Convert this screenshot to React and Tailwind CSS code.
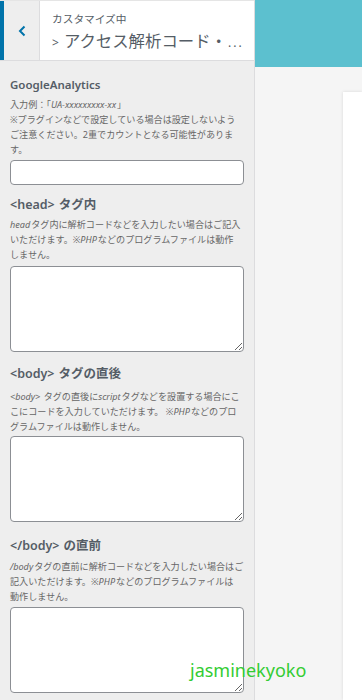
import React from 'react';

const sans = { fontFamily: "'Noto Sans', 'Noto Sans CJK JP', sans-serif" };

// 説明文
const Desc = ({ children, className = '' }) => (
  <p className={`text-[9.1px] leading-[15px] text-[#666] whitespace-nowrap ${className}`}>{children}</p>
);

const Heading = ({ children, className = '' }) => (
  <h3 className={`text-[12.5px] leading-[18px] font-bold text-[#555d66] ${className}`}>{children}</h3>
);

const Tag = ({ children }) => <span className="font-semibold mr-[4px]">{children}</span>;

const I = ({ children }) => <i className="mr-[1px]">{children}</i>;

const Area = () => (
  <textarea className="block w-[234px] h-[86px] bg-white border border-[#8c8f94] rounded-[4px] resize-y" />
);

export default function App() {
  return (
    <div className="relative flex w-[362px] h-[700px] overflow-hidden bg-[#f5f5f5]" style={sans}>
      {/* カスタマイザー サイドバー */}
      <aside className="w-[255px] shrink-0 flex flex-col bg-[#eeeeee] border-r border-[#dcdcde]">
        <header className="h-[61px] shrink-0 flex bg-white border-b border-[#dcdcde] border-t border-t-[#e5e5e5]">
          <button className="w-[40px] shrink-0 flex items-center justify-center bg-[#eeeeee] border-l-[4px] border-l-[#0073aa] border-r border-r-[#dcdcde] text-[#0073aa]">
            <svg width="8" height="12" viewBox="0 0 8 12" fill="none">
              <path d="M6.5 1.5 L2 6 L6.5 10.5" stroke="currentColor" strokeWidth="2" />
            </svg>
          </button>
          <div className="flex-1 min-w-0 pl-[12px] pt-[10px]">
            <div className="text-[10.7px] leading-[16px] text-[#555d66]">カスタマイズ中</div>
            <div className="flex items-baseline whitespace-nowrap text-[#555d66] mt-[3px]">
              <span className="text-[12px] mr-[5px]">&gt;</span>
              <span className="text-[16.4px] leading-[22px]">アクセス解析コード・</span>
              <span className="text-[12px] tracking-[2px] ml-[1px]">...</span>
            </div>
          </div>
        </header>

        <div className="px-[10px] pt-[15px]">
          <h3 className="text-[11.5px] leading-[18px] font-semibold text-[#555d66] mb-[3px]">GoogleAnalytics</h3>
          <Desc>
            入力例：「<I>UA-xxxxxxxxx-xx</I>」<br />
            ※プラグインなどで設定している場合は設定しないよう<br />
            ご注意ください。2重でカウントとなる可能性がありま<br />
            す。
          </Desc>
          <input type="text" className="block mt-[3px] w-[234px] h-[25px] bg-white border border-[#8c8f94] rounded-[4px]" />

          <Heading className="mt-[11px] mb-[3px]"><Tag>&lt;head&gt;</Tag>タグ内</Heading>
          <Desc className="mb-[4px]">
            <I>head</I>タグ内に解析コードなどを入力したい場合はご記入<br />
            いただけます。※<I>PHP</I>などのプログラムファイルは動作<br />
            しません。
          </Desc>
          <Area />

          <Heading className="mt-[13px] mb-[6px]"><Tag>&lt;body&gt;</Tag>タグの直後</Heading>
          <Desc className="mb-[2px]">
            <I>&lt;body&gt;</I> タグの直後に<I>script</I>タグなどを設置する場合にこ<br />
            こにコードを入力していただけます。 ※<I>PHP</I>などのプロ<br />
            グラムファイルは動作しません。
          </Desc>
          <Area />

          <Heading className="mt-[15px] mb-[4px]"><Tag>&lt;/body&gt;</Tag>の直前</Heading>
          <Desc className="mb-[3px]">
            <I>/body</I>タグの直前に解析コードなどを入力したい場合はご<br />
            記入いただけます。※<I>PHP</I>などのプログラムファイルは<br />
            動作しません。
          </Desc>
          <Area />
        </div>
      </aside>

      {/* プレビュー */}
      <main className="flex-1 flex flex-col">
        <div className="h-[67px] shrink-0 bg-[#5cc0cf]" />
        <div className="flex-1 pl-[88px] pt-[25px]">
          <div className="h-full bg-white shadow-[0_0_3px_rgba(0,0,0,0.12)]" />
        </div>
      </main>

      <div className="absolute left-[190px] top-[658px] text-[18px] leading-[24px] text-[#33cc33]">
        jasminekyoko
      </div>
    </div>
  );
}
